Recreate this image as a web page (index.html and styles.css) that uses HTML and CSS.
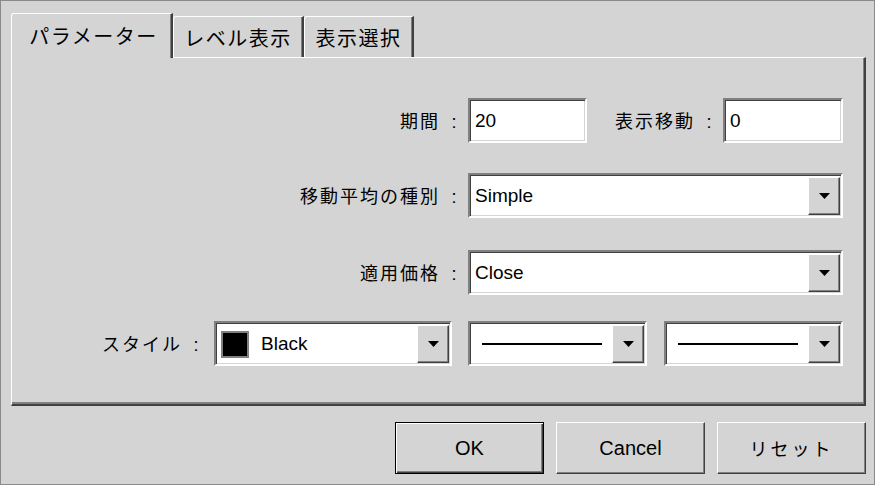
FILE: index.html
```html
<!DOCTYPE html>
<html lang="ja">
<head>
<meta charset="utf-8">
<title>パラメーター</title>
<link rel="stylesheet" href="styles.css">
</head>
<body>
<div class="window">
  <div class="tabs">
    <div class="tab active t1">パラメーター</div>
    <div class="tab t2">レベル表示</div>
    <div class="tab t3">表示選択</div>
  </div>
  <div class="panel">
    <div class="row r1">
      <span class="lbl">期間<span class="colon">:</span></span>
      <div class="field w119"><span class="val">20</span></div>
      <span class="lbl l2">表示移動<span class="colon">:</span></span>
      <div class="field w120"><span class="val">0</span></div>
    </div>
    <div class="row r2">
      <span class="lbl">移動平均の種別<span class="colon">:</span></span>
      <div class="field combo wide"><span class="val">Simple</span><span class="cbtn"><svg width="11" height="6" viewBox="0 0 11 6"><polygon points="0,0 11,0 5.5,6" fill="#000"/></svg></span></div>
    </div>
    <div class="row r3">
      <span class="lbl">適用価格<span class="colon">:</span></span>
      <div class="field combo wide"><span class="val">Close</span><span class="cbtn"><svg width="11" height="6" viewBox="0 0 11 6"><polygon points="0,0 11,0 5.5,6" fill="#000"/></svg></span></div>
    </div>
    <div class="row r4">
      <span class="lbl l4">スタイル<span class="colon">:</span></span>
      <div class="field combo w238"><span class="swatch"></span><span class="val black">Black</span><span class="cbtn"><svg width="11" height="6" viewBox="0 0 11 6"><polygon points="0,0 11,0 5.5,6" fill="#000"/></svg></span></div>
      <div class="field combo w179 g16"><span class="linewrap"><span class="line"></span></span><span class="cbtn"><svg width="11" height="6" viewBox="0 0 11 6"><polygon points="0,0 11,0 5.5,6" fill="#000"/></svg></span></div>
      <div class="field combo w179 g17"><span class="linewrap"><span class="line"></span></span><span class="cbtn"><svg width="11" height="6" viewBox="0 0 11 6"><polygon points="0,0 11,0 5.5,6" fill="#000"/></svg></span></div>
    </div>
  </div>
  <div class="buttons">
    <div class="btn default">OK</div>
    <div class="btn">Cancel</div>
    <div class="btn jp">リセット</div>
  </div>
</div>
</body>
</html>
```
FILE: styles.css
```css
html, body {
  margin: 0;
  padding: 0;
  background: #d4d4d4;
}

.window {
  width: 875px;
  height: 485px;
  box-sizing: border-box;
  border: 1px solid #8a8a8a;
  background: #d4d4d4;
  color: #000;
  font-family: "Noto Sans CJK JP", sans-serif;
  display: flex;
  flex-direction: column;
}

/* ---------- tabs ---------- */
.tabs {
  display: flex;
  align-items: flex-end;
  height: 44px;
  margin: 12px 0 0 10px;
  position: relative;
  z-index: 1;
}

.tab {
  box-sizing: border-box;
  height: 41px;
  border-top: 1px solid #fff;
  border-left: 1px solid #fff;
  border-right: 2px solid #404040;
  box-shadow: inset -1px 0 0 #808080;
  border-radius: 3px 0 0 0;
  background: #d4d4d4;
  font-size: 20px;
  letter-spacing: 1.5px;
  display: flex;
  align-items: center;
  justify-content: center;
  padding-top: 1px;
}

.tab.active {
  height: 45px;
  margin-bottom: -1px;
  padding-top: 0;
  padding-bottom: 2px;
}

.t1 { width: 162px; padding-left: 4px; }
.t2 { width: 131px; }
.t3 { width: 110px; }

/* ---------- panel ---------- */
.panel {
  box-sizing: border-box;
  width: 855px;
  height: 349px;
  margin-left: 10px;
  border-top: 1px solid #fff;
  border-left: 1px solid #fff;
  border-right: 2px solid #404040;
  border-bottom: 2px solid #404040;
  box-shadow: inset -1px -2px 0 #808080;
  padding: 40px 21px 0 0;
  display: flex;
  flex-direction: column;
}

.row {
  display: flex;
  justify-content: flex-end;
  align-items: center;
  height: 45px;
}

.r2 { margin-top: 30px; }
.r3 { margin-top: 32px; }
.r4 { margin-top: 26px; }

.lbl {
  font-size: 18px;
  letter-spacing: 2px;
  white-space: nowrap;
  text-align: right;
  line-height: 24px;
}

.colon {
  display: inline-block;
  width: 28px;
  text-align: center;
  letter-spacing: 0;
  font-family: "Liberation Sans", sans-serif;
  font-size: 18px;
}

.l2 { width: 136px; }
.l4 { margin-right: 4px; }

/* ---------- fields ---------- */
.field {
  box-sizing: border-box;
  height: 45px;
  background: #fff;
  border: 2px solid;
  border-color: #808080 #fff #fff #808080;
  box-shadow: inset 1px 1px 0 #404040, inset -1px -1px 0 #d4d4d4;
  display: flex;
  align-items: center;
}

.w119 { width: 119px; }
.w120 { width: 120px; }
.wide { width: 375px; }
.w238 { width: 238px; }
.w179 { width: 179px; }
.g16 { margin-left: 16px; }
.g17 { margin-left: 17px; }

.val {
  flex: 1;
  padding-left: 5px;
  font-family: "Liberation Sans", sans-serif;
  font-size: 19px;
  line-height: 24px;
}

.val.black { padding-left: 12px; }

.combo { padding: 2px 1px 1px 0; }

.cbtn {
  box-sizing: border-box;
  width: 32px;
  align-self: stretch;
  background: #d4d4d4;
  border: 1px solid;
  border-color: #fff #404040 #404040 #fff;
  box-shadow: inset -1px -1px 0 #808080;
  display: flex;
  align-items: center;
  justify-content: center;
}

.cbtn svg { display: block; }

.swatch {
  box-sizing: border-box;
  width: 28px;
  height: 27px;
  margin-left: 5px;
  border: 2px solid #808080;
  background: #000;
}

.linewrap {
  flex: 1;
  display: flex;
  align-items: center;
  padding-left: 12px;
}

.line {
  width: 120px;
  height: 2px;
  background: #000;
}

/* ---------- buttons ---------- */
.buttons {
  display: flex;
  justify-content: flex-end;
  gap: 12px;
  margin: 16px 8px 0 0;
}

.btn {
  box-sizing: border-box;
  width: 149px;
  height: 52px;
  border: 1px solid;
  border-color: #fff #404040 #404040 #fff;
  box-shadow: inset -1px -1px 0 #808080;
  display: flex;
  align-items: center;
  justify-content: center;
  font-family: "Liberation Sans", sans-serif;
  font-size: 20px;
}

.btn.default {
  border: 1px solid #000;
  box-shadow: inset 1px 1px 0 #fff, inset -1px -1px 0 #404040, inset -2px -2px 0 #808080;
}

.btn.jp {
  font-family: "Noto Sans CJK JP", sans-serif;
  font-size: 18px;
  letter-spacing: 3px;
}
```
